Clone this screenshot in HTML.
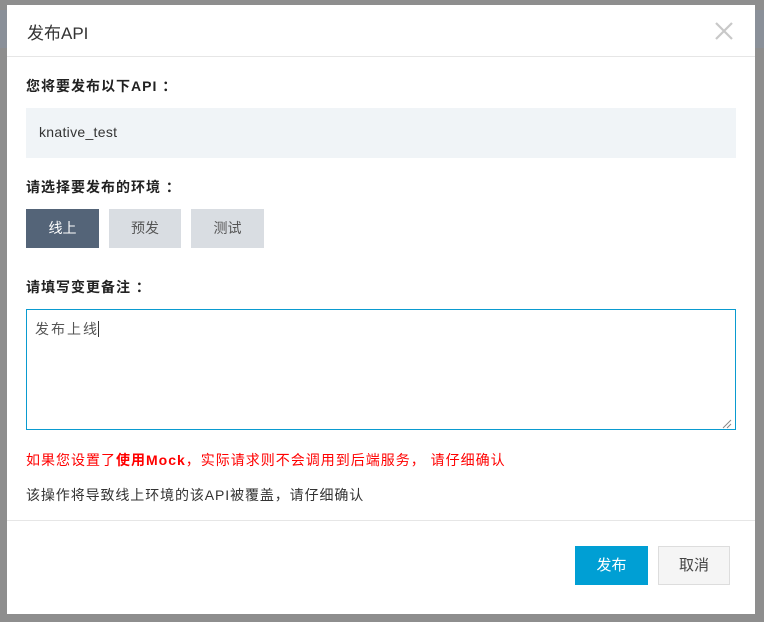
<!DOCTYPE html>
<html><head><meta charset="utf-8"><style>
body{margin:0;width:764px;height:622px;background:#8d8d8d;font-family:"Liberation Sans","Noto Sans CJK SC",sans-serif;position:relative;overflow:hidden}
.bg{position:absolute;left:0;top:0;width:764px;height:622px;background:#8e8e8e}
.dlg{position:absolute;left:7px;top:5px;width:748px;height:609px;background:#fff}
.a{position:absolute}
.t{font-size:14px;color:#333;letter-spacing:1px}
.b{font-weight:bold;color:#222}
.btn{position:absolute;height:39px;line-height:39px;text-align:center;font-size:14px}
</style></head><body>
<div class="bg"></div>
<div class="a" style="left:0;top:10px;width:764px;height:38px;background:#8a9099"></div>
<div class="dlg">
 <div class="a" style="left:20px;top:14px;font-size:17px;color:#333">发布API</div>
 <svg class="a" style="left:708px;top:17px" width="18" height="18"><path d="M1 1L17 17M17 1L1 17" stroke="#c8c8c8" stroke-width="2.2"/></svg>
 <div class="a" style="left:0;top:51px;width:748px;height:1px;background:#e6e6e6"></div>
 <div class="a t b" style="left:19px;top:71px">您将要发布以下API ：</div>
 <div class="a" style="left:19px;top:103px;width:710px;height:50px;background:#f0f4f7"></div>
 <div class="a t" style="left:32px;top:119px;color:#333;letter-spacing:0.3px">knative_test</div>
 <div class="a t b" style="left:19px;top:172px">请选择要发布的环境 ：</div>
 <div class="btn" style="left:19px;top:204px;width:73px;background:#546478;color:#fff">线上</div>
 <div class="btn" style="left:102px;top:204px;width:72px;background:#d9dde2;color:#555">预发</div>
 <div class="btn" style="left:184px;top:204px;width:73px;background:#d9dde2;color:#555">测试</div>
 <div class="a t b" style="left:19px;top:272px">请填写变更备注 ：</div>
 <div class="a" style="left:19px;top:304px;width:708px;height:119px;border:1px solid #0a9bd0"></div>
 <div class="a t" style="left:28px;top:314px;color:#555;letter-spacing:2px">发布上线<span style="border-left:1px solid #333;margin-left:-1px"></span></div>
 <svg class="a" style="left:715px;top:414px" width="10" height="10"><path d="M1 9L9 1M5 9L9 5" stroke="#888"/></svg>
 <div class="a t" style="left:19px;top:445px;color:#f00;letter-spacing:1px">如果您设置了<b>使用Mock</b>，实际请求则不会调用到后端服务， 请仔细确认</div>
 <div class="a t" style="left:19px;top:480px;color:#333;letter-spacing:0.9px">该操作将导致线上环境的该API被覆盖，请仔细确认</div>
 <div class="a" style="left:0;top:515px;width:748px;height:1px;background:#e6e6e6"></div>
 <div class="btn" style="left:568px;top:541px;width:73px;background:#009fd4;color:#fff;font-size:15px">发布</div>
 <div class="btn" style="left:651px;top:541px;width:70px;height:37px;line-height:37px;background:#f5f5f5;border:1px solid #ddd;color:#444;font-size:15px">取消</div>
</div>
</body></html>
